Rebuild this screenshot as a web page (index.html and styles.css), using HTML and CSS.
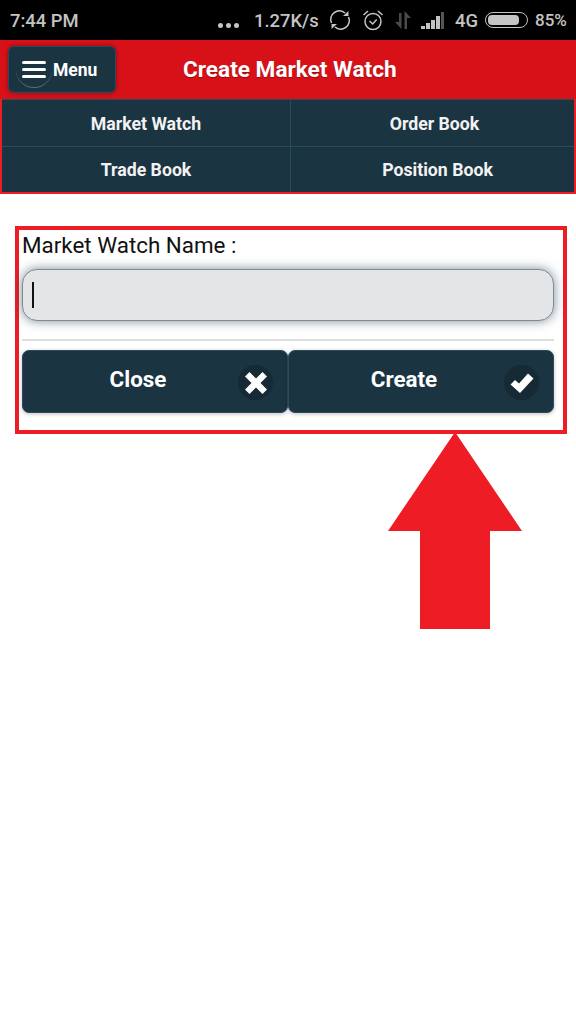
FILE: index.html
```html
<!DOCTYPE html>
<html lang="en">
<head>
    <meta charset="UTF-8">
    <meta name="viewport" content="width=device-width, initial-scale=1.0">
    <title>Create Market Watch</title>
    <link rel="stylesheet" href="styles.css">
</head>
<body>
    <div class="status-bar">
        <span class="clock">7:44 PM</span>
        <span class="dots"><i></i><i></i><i></i></span>
        <span class="speed">1.27K/s</span>
        <svg class="ico-sync" width="22" height="22" viewBox="0 0 22 22" fill="none" stroke="#c4c4c4" stroke-width="1.6">
            <path d="M2.500 14A8.600 8.600 0 0 1 16 4"/>
            <path d="M19.500 8A8.600 8.600 0 0 1 6 18"/>
            <path d="M14 7h5.500V2z" fill="#c4c4c4" stroke="none"/>
            <path d="M8 15H2.500v5z" fill="#c4c4c4" stroke="none"/>
        </svg>
        <svg class="ico-alarm" width="22" height="22" viewBox="0 0 22 22" fill="none" stroke="#c4c4c4" stroke-width="1.5">
            <circle cx="11" cy="12.500" r="8"/>
            <path d="M7.500 12l3.200 3 4-4.500"/>
            <path d="M1.500 6L6 2"/>
            <path d="M20.500 6L16 2"/>
        </svg>
        <svg class="ico-data" width="18" height="20" viewBox="0 0 18 20" fill="#4a4a4a">
            <path d="M5 3h2.500v16L1 12h4z"/>
            <path d="M10.500 1L17 8h-4v11h-2.500z"/>
        </svg>
        <svg class="ico-signal" width="25" height="18" viewBox="0 0 25 18" fill="#c4c4c4">
            <rect x="0" y="15" width="4" height="3"/>
            <rect x="5" y="12" width="4" height="6"/>
            <rect x="10" y="9" width="4" height="9"/>
            <rect x="15" y="5" width="4" height="13"/>
            <rect x="20" y="1" width="3" height="17" fill="#555"/>
        </svg>
        <span class="net">4G</span>
        <span class="battery"><span class="battery-level"></span></span>
        <span class="percent">85%</span>
    </div>

    <div class="topbar">
        <button class="menu-btn">
            <span class="menu-icon"><i></i><i></i><i></i></span>
            Menu
        </button>
        <h1>Create Market Watch</h1>
    </div>

    <div class="nav">
        <a class="nav-item">Market Watch</a>
        <a class="nav-item">Order Book</a>
        <a class="nav-item">Trade Book</a>
        <a class="nav-item">Position Book</a>
    </div>

    <div class="form-box">
        <label class="form-label" for="name">Market Watch Name :</label>
        <div class="text-input" id="name"><span class="caret"></span></div>
        <hr class="divider">
        <div class="actions">
            <button class="action-btn">
                Close
                <span class="action-icon">
                    <svg width="24" height="24" viewBox="0 0 24 24"><path d="M5.500 1L12 7.500 18.500 1 23 5.500 16.500 12 23 18.500 18.500 23 12 16.500 5.500 23 1 18.500 7.500 12 1 5.500z" fill="#fff"/></svg>
                </span>
            </button>
            <button class="action-btn">
                Create
                <span class="action-icon">
                    <svg width="24" height="24" viewBox="0 0 24 24"><path d="M0.500 13.500L5 9 9 12.500 18 2.500 23.500 7.500 10 22z" fill="#fff"/></svg>
                </span>
            </button>
        </div>
    </div>

    <!-- annotation arrow over the page -->
    <svg class="arrow" width="136" height="200" viewBox="0 0 136 200">
        <path d="M67 1L134 100H102V198H32V100H0z" fill="#ee1c25"/>
    </svg>
</body>
</html>
```

FILE: styles.css
```css
html, body {
    margin: 0;
    padding: 0;
    background-color: #fff;
}
body {
    position: relative;
    height: 1024px;
    overflow: hidden;
    font-family: Roboto, sans-serif;
}
.status-bar {
    display: flex;
    align-items: center;
    height: 40px;
    background-color: #000;
    color: #c4c4c4;
    font-size: 18.400px;
    font-weight: 500;
    padding-left: 10px;
}
.clock {
    width: 208px;
}
.dots {
    display: flex;
    gap: 3px;
    width: 36px;
    margin-top: 10px;
}
.dots i {
    width: 5px;
    height: 5px;
    border-radius: 50%;
    background-color: #c4c4c4;
}
.speed {
    width: 75px;
}
.ico-sync {
    margin-right: 11px;
}
.ico-alarm {
    margin-right: 10px;
}
.ico-data {
    margin-right: 9px;
}
.ico-signal {
    margin-right: 9px;
}
.net {
    width: 30px;
}
.battery {
    display: flex;
    align-items: center;
    box-sizing: border-box;
    width: 43px;
    height: 16px;
    border: 1.5px solid #c4c4c4;
    border-radius: 8px;
    padding: 2px;
    margin-right: 7px;
}
.battery-level {
    width: 85%;
    height: 100%;
    background-color: #c4c4c4;
    border-radius: 4px;
}
.percent {
    font-size: 17px;
}
.topbar {
    display: flex;
    align-items: center;
    height: 59px;
    box-sizing: border-box;
    background-color: #d81118;
    padding-left: 8px;
}
.topbar h1 {
    margin: 0 0 0 67px;
    color: #fff;
    font-size: 22.600px;
    font-weight: 700;
    text-shadow: 0 1px 1px rgba(0, 0, 0, 0.3);
}
.menu-btn {
    display: flex;
    align-items: center;
    box-sizing: border-box;
    width: 108px;
    height: 47px;
    padding: 0 0 0 7px;
    background-color: #1a3442;
    border: 1px solid #2c4a5c;
    border-radius: 6px;
    box-shadow: 0 0 4px rgba(0, 0, 0, 0.4);
    color: #fff;
    font-family: Roboto, sans-serif;
    font-size: 17.500px;
    font-weight: 700;
}
.menu-icon {
    display: flex;
    flex-direction: column;
    justify-content: center;
    gap: 4px;
    box-sizing: border-box;
    width: 36px;
    height: 36px;
    padding: 0 6px;
    margin-right: 1px;
    border-radius: 50%;
    border-bottom: 1px solid #5c6f7a;
}
.menu-icon i {
    display: block;
    height: 3px;
    background-color: #fff;
    border-radius: 2px;
}
.nav {
    display: grid;
    grid-template-columns: 288px 1fr;
    grid-template-rows: 46px 45px;
    gap: 1px;
    background-color: #2a4a5e;
    border-left: 2px solid #ee1c25;
    border-right: 2px solid #ee1c25;
    border-bottom: 2px solid #ee1c25;
    height: 95px;
    box-sizing: border-box;
    padding-top: 1px;
}
.nav-item {
    display: flex;
    align-items: center;
    justify-content: center;
    background-color: #1a3442;
    color: #f2f2f2;
    font-size: 17.700px;
    font-weight: 700;
}
.nav-item:nth-child(-n+2) {
    padding-top: 1px;
}
.nav-item:nth-child(2) {
    padding-left: 4px;
}
.nav-item:nth-child(4) {
    padding-left: 10px;
}
.form-box {
    box-sizing: border-box;
    width: 552px;
    height: 208px;
    margin: 32px 0 0 15px;
    padding: 2px 9px 0 3px;
    border: 4px solid #ee1c25;
}
.form-label {
    display: block;
    color: #111;
    font-size: 22.400px;
    line-height: 26px;
    margin-bottom: 11px;
}
.text-input {
    display: flex;
    align-items: center;
    box-sizing: border-box;
    height: 52px;
    padding-left: 9px;
    background-color: #e4e5e7;
    border: 1px solid #858a8c;
    border-radius: 15px;
    box-shadow: 0 0 11px rgba(30, 65, 90, 0.6);
}
.caret {
    width: 2px;
    height: 26px;
    background-color: #111;
}
.divider {
    height: 2px;
    border: 0;
    margin: 18px 0 9px;
    background-color: #dedede;
}
.actions {
    display: grid;
    grid-template-columns: 1fr 1fr;
}
.action-btn {
    position: relative;
    box-sizing: border-box;
    height: 63px;
    padding: 0 34px 6px 0;
    background-color: #1a3442;
    border: 1px solid #2c4a5c;
    border-radius: 7px;
    box-shadow: 0 1px 4px rgba(0, 0, 0, 0.25);
    color: #fff;
    font-family: Roboto, sans-serif;
    font-size: 22.400px;
    font-weight: 700;
}
/* icon sits over the right end of the button */
.action-icon {
    position: absolute;
    right: 14px;
    top: 14px;
    display: flex;
    align-items: center;
    justify-content: center;
    width: 35px;
    height: 35px;
    border-radius: 50%;
    background-color: #162a35;
}
.arrow {
    position: absolute;
    left: 388px;
    top: 431px;
}
```
